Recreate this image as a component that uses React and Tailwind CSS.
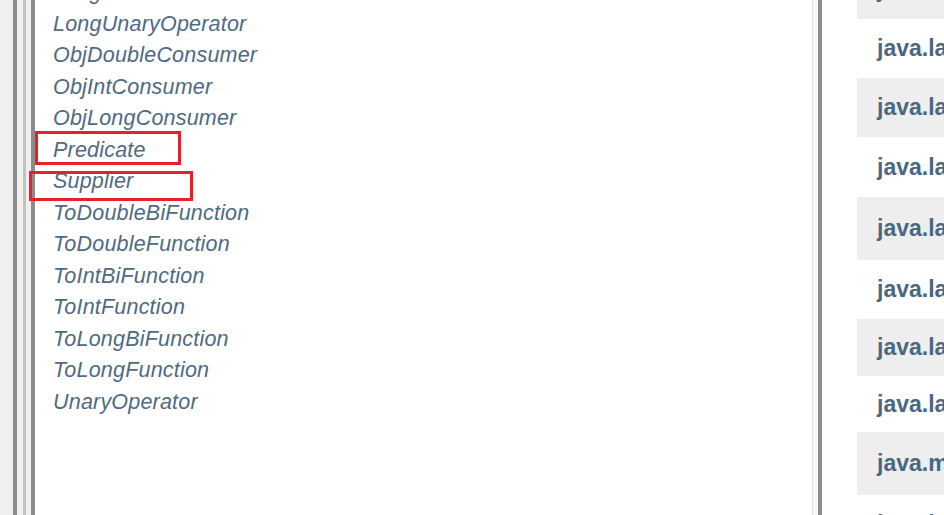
import React from "react";

const items = [
  "LongToIntFunction",
  "LongUnaryOperator",
  "ObjDoubleConsumer",
  "ObjIntConsumer",
  "ObjLongConsumer",
  "Predicate",
  "Supplier",
  "ToDoubleBiFunction",
  "ToDoubleFunction",
  "ToIntBiFunction",
  "ToIntFunction",
  "ToLongBiFunction",
  "ToLongFunction",
  "UnaryOperator",
];

const rows = [
  { h: "h-[59px]", bg: "bg-[#eeeeee]", t: "java.la" },
  { h: "h-[59px]", bg: "bg-white", t: "java.la" },
  { h: "h-[59px]", bg: "bg-[#eeeeee]", t: "java.la" },
  { h: "h-[60px]", bg: "bg-white", t: "java.la" },
  { h: "h-[63px]", bg: "bg-[#eeeeee]", t: "java.la" },
  { h: "h-[59px]", bg: "bg-white", t: "java.la" },
  { h: "h-[57px]", bg: "bg-[#eeeeee]", t: "java.la" },
  { h: "h-[56px]", bg: "bg-white", t: "java.la" },
  { h: "h-[63px]", bg: "bg-[#eeeeee]", t: "java.m" },
  { h: "h-[59px]", bg: "bg-white", t: "java.la" },
];

export default function App() {
  return (
    <div
      className="relative flex h-[515px] w-[944px] overflow-hidden bg-white"
      style={{ fontFamily: '"Liberation Sans", Arial, sans-serif' }}
    >
      <div className="w-[13px] shrink-0 bg-[#f0f0f0]" />
      <div className="w-[4px] shrink-0 bg-[#8c8c8c]" />
      <div className="w-[6px] shrink-0 bg-[#efefef]" />
      <div className="w-[3px] shrink-0 bg-[#c2c2c2]" />
      <div className="w-[5px] shrink-0 bg-[#efefef]" />
      <div className="w-[4px] shrink-0 bg-[#8c8c8c]" />

      <div className="w-[777px] shrink-0 bg-white pl-[18px]">
        <ul className="-mt-[23px] flex flex-col">
          {items.map((it) => (
            <li
              key={it}
              className="h-[31.5px] text-[21.5px] leading-[31.5px] italic tracking-[0.2px] text-[#4d6a86] whitespace-nowrap"
            >
              {it}
            </li>
          ))}
        </ul>
      </div>

      <div className="w-px shrink-0 bg-[#e4e4e4]" />
      <div className="w-[5px] shrink-0 bg-[#f7f7f7]" />
      <div className="w-[4px] shrink-0 bg-[#8c8c8c]" />
      <div className="w-[35px] shrink-0 bg-white" />

      <div className="flex flex-1 flex-col -mt-[40px]">
        {rows.map((r, i) => (
          <div
            key={i}
            className={`${r.h} ${r.bg} flex shrink-0 items-center pl-[20px] text-[23px] font-bold text-[#4a6782] whitespace-nowrap`}
          >
            {r.t}
          </div>
        ))}
      </div>

      <div className="absolute left-[35px] top-[131px] h-[34px] w-[146px] border-[3px] border-[#e8202a]" />
      <div className="absolute left-[29px] top-[171px] h-[30px] w-[164px] border-[3px] border-[#e8202a]" />
    </div>
  );
}
